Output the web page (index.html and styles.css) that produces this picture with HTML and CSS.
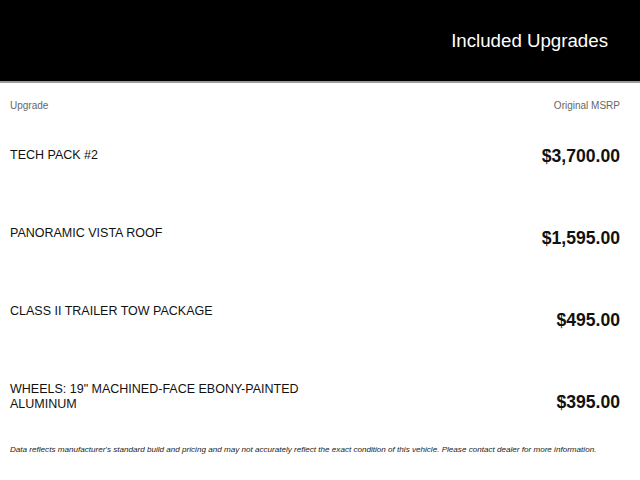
FILE: index.html
```html
<!DOCTYPE html>
<html>
<head>
<meta charset="utf-8">
<link rel="stylesheet" href="styles.css">
</head>
<body>
<header class="banner">
  <h1 class="banner-title">Included Upgrades</h1>
</header>
<main class="content">
  <div class="colhead">
    <span>Upgrade</span>
    <span>Original MSRP</span>
  </div>
  <div class="table">
    <div class="names">
      <div class="name">TECH PACK #2</div>
      <div class="name">PANORAMIC VISTA ROOF</div>
      <div class="name">CLASS II TRAILER TOW PACKAGE</div>
      <div class="name">WHEELS: 19" MACHINED-FACE EBONY-PAINTED ALUMINUM</div>
    </div>
    <div class="prices">
      <div class="price">$3,700.00</div>
      <div class="price">$1,595.00</div>
      <div class="price">$495.00</div>
      <div class="price">$395.00</div>
    </div>
  </div>
  <p class="disclaimer">Data reflects manufacturer's standard build and pricing and may not accurately reflect the exact condition of this vehicle. Please contact dealer for more information.</p>
</main>
</body>
</html>
```

FILE: styles.css
```css
html, body {
  margin: 0;
  padding: 0;
  background: #fff;
  font-family: "Liberation Sans", Arial, sans-serif;
  color: #111;
}
.banner {
  height: 81px;
  background: #000;
  border-bottom: 2px solid #9a9a9a;
  display: flex;
  justify-content: flex-end;
  align-items: center;
  padding-right: 32px;
}
.banner-title {
  margin: 0;
  color: #fff;
  font-weight: normal;
  font-size: 18.7px;
  line-height: 22px;
}
.content {
  padding: 0 20px 0 10px;
}
.colhead {
  display: flex;
  justify-content: space-between;
  margin-top: 17px;
  font-size: 10px;
  line-height: 12px;
  color: #666;
}
.table {
  display: flex;
  justify-content: space-between;
  margin-top: 34px;
}
.names {
  display: flex;
  flex-direction: column;
  gap: 63px;
  padding-top: 2px;
  width: 310px;
}
.name {
  font-size: 12.5px;
  line-height: 15px;
  color: #111;
}
.prices {
  display: flex;
  flex-direction: column;
  align-items: flex-end;
  gap: 62px;
}
.price {
  font-size: 17.6px;
  line-height: 20px;
  font-weight: bold;
  color: #111;
}
.disclaimer {
  margin: 33px 0 0;
  font-size: 8.1px;
  line-height: 10px;
  font-style: italic;
  color: #222;
}
```
